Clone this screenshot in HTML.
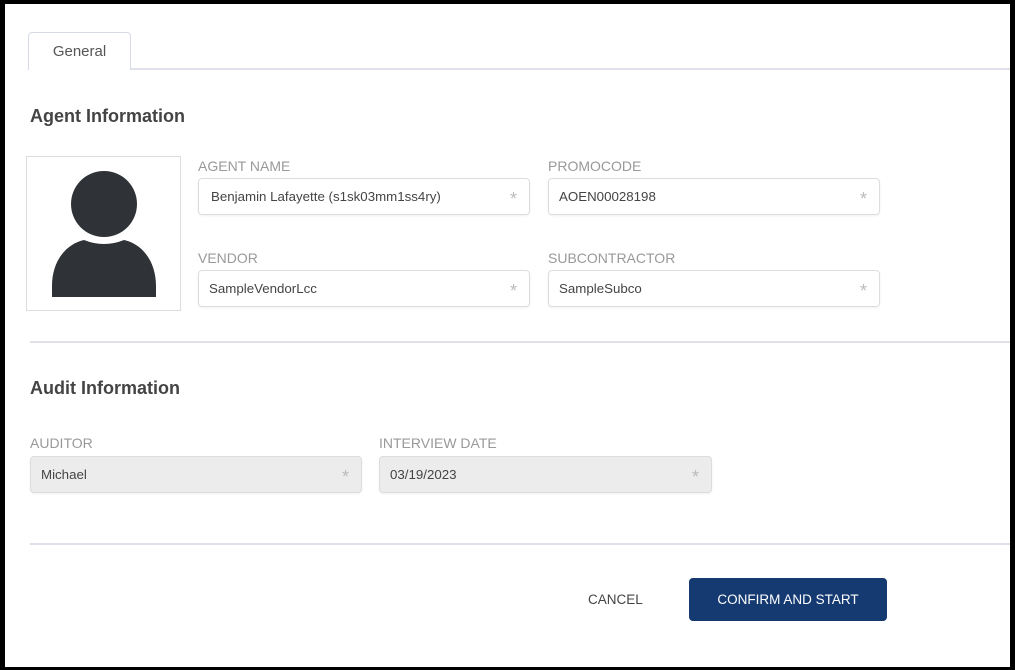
<!DOCTYPE html>
<html><head><style>
*{margin:0;padding:0;box-sizing:border-box}
body{width:1015px;height:670px;background:#000;position:relative;font-family:"Liberation Sans",sans-serif;overflow:hidden}
.page{position:absolute;left:5px;top:4px;width:1005px;height:663px;background:#fff}
.a{position:absolute}
.tab{left:28px;top:32px;width:103px;height:38px;border:1px solid #d6dbe6;border-bottom:none;border-radius:4px 4px 0 0;background:#fff;color:#555;font-size:15px;text-align:center;line-height:38px;z-index:2}
.line{height:2px;background:#e0e0ea}
h2{position:absolute;font-size:18px;font-weight:bold;color:#444}
.lbl{position:absolute;font-size:14px;color:#999}
.in{position:absolute;height:37px;border:1px solid #ddd;border-radius:4px;font-size:13.3px;color:#444;line-height:36px;padding-left:12px;box-shadow:0 1px 2px rgba(0,0,0,.06)}
.in span{position:absolute;right:12px;top:2px;color:#bbb;font-size:18px}
.g{background:#ececec;padding-left:10px}
</style></head><body>
<div class="page"></div>
<div class="a tab">General</div>
<div class="a line" style="left:130px;top:68px;width:880px"></div>
<h2 style="left:30px;top:106px">Agent Information</h2>
<div class="a" style="left:26px;top:156px;width:155px;height:155px;border:1px solid #ddd"></div>
<svg class="a" style="left:26px;top:156px" width="155" height="155"><circle cx="78" cy="48" r="33" fill="#2f3236"/><path d="M26 141 L26 130 C26 105 40 88 58 84 Q78 92 98 84 C116 88 130 105 130 130 L130 141 Z" fill="#2f3236"/></svg>
<div class="lbl" style="left:198px;top:158px">AGENT NAME</div>
<div class="in" style="left:198px;top:178px;width:332px">Benjamin Lafayette (s1sk03mm1ss4ry)<span>*</span></div>
<div class="lbl" style="left:548px;top:158px">PROMOCODE</div>
<div class="in" style="left:548px;top:178px;width:332px;padding-left:10px">AOEN00028198<span>*</span></div>
<div class="lbl" style="left:198px;top:250px">VENDOR</div>
<div class="in" style="left:198px;top:270px;width:332px;padding-left:10px">SampleVendorLcc<span>*</span></div>
<div class="lbl" style="left:548px;top:250px">SUBCONTRACTOR</div>
<div class="in" style="left:548px;top:270px;width:332px;padding-left:10px">SampleSubco<span>*</span></div>
<div class="a line" style="left:30px;top:341px;width:980px"></div>
<h2 style="left:30px;top:378px">Audit Information</h2>
<div class="lbl" style="left:30px;top:435px">AUDITOR</div>
<div class="in g" style="left:30px;top:456px;width:332px">Michael<span>*</span></div>
<div class="lbl" style="left:379px;top:435px">INTERVIEW DATE</div>
<div class="in g" style="left:379px;top:456px;width:333px">03/19/2023<span>*</span></div>
<div class="a line" style="left:30px;top:543px;width:980px"></div>
<div class="a" style="left:588px;top:592px;font-size:13.5px;color:#444">CANCEL</div>
<div class="a" style="left:689px;top:578px;width:198px;height:43px;background:#153a72;border-radius:4px;color:#fff;font-size:13.5px;text-align:center;line-height:43px">CONFIRM AND START</div>
</body></html>
